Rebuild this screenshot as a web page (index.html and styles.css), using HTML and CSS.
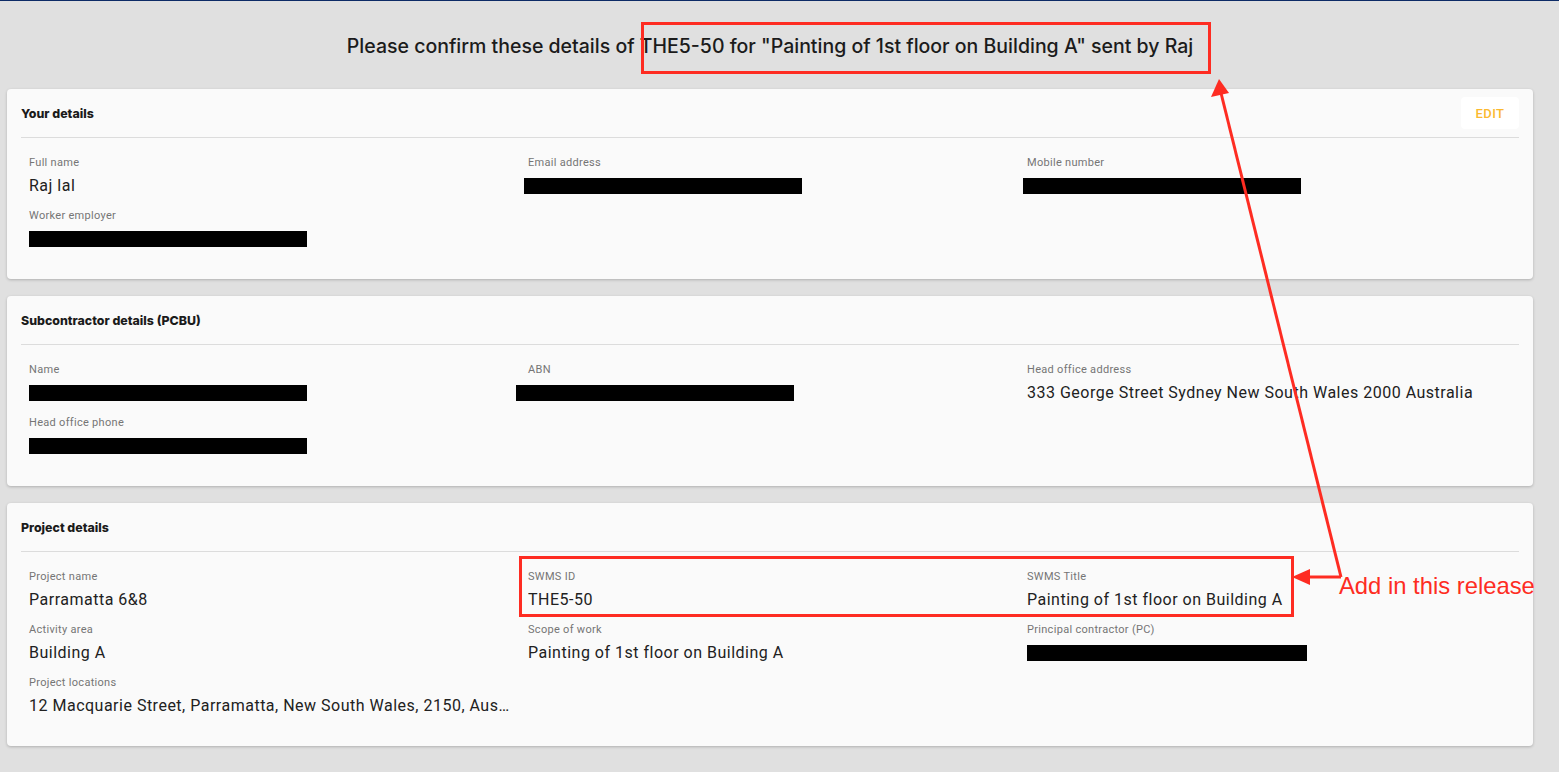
FILE: index.html
```html
<!DOCTYPE html>
<html lang="en">
<head>
    <meta charset="UTF-8">
    <meta name="viewport" content="width=device-width, initial-scale=1.0">
    <title>Confirm SWMS details</title>
    <link rel="stylesheet" href="styles.css">
</head>
<body>
    <h1 class="page-title">Please confirm these details of THE5-50 for "Painting of 1st floor on Building A" sent by Raj</h1>

    <div class="cards">
        <div class="card">
            <div class="card-header">
                <span class="card-title">Your details</span>
                <button class="edit-btn">EDIT</button>
            </div>
            <div class="card-body">
                <div class="field">
                    <div class="label">Full name</div>
                    <div class="value">Raj lal</div>
                </div>
                <div class="field">
                    <div class="label">Email address</div>
                    <div class="value masked"><span class="redact shift-sm"></span></div>
                </div>
                <div class="field">
                    <div class="label">Mobile number</div>
                    <div class="value masked"><span class="redact shift-sm"></span></div>
                </div>
                <div class="field">
                    <div class="label">Worker employer</div>
                    <div class="value masked"><span class="redact"></span></div>
                </div>
            </div>
        </div>

        <div class="card">
            <div class="card-header">
                <span class="card-title">Subcontractor details (PCBU)</span>
            </div>
            <div class="card-body">
                <div class="field">
                    <div class="label">Name</div>
                    <div class="value masked"><span class="redact"></span></div>
                </div>
                <div class="field">
                    <div class="label">ABN</div>
                    <div class="value masked"><span class="redact shift-lg"></span></div>
                </div>
                <div class="field">
                    <div class="label">Head office address</div>
                    <div class="value">333 George Street Sydney New South Wales 2000 Australia</div>
                </div>
                <div class="field">
                    <div class="label">Head office phone</div>
                    <div class="value masked"><span class="redact"></span></div>
                </div>
            </div>
        </div>

        <div class="card">
            <div class="card-header">
                <span class="card-title">Project details</span>
            </div>
            <div class="card-body">
                <div class="field">
                    <div class="label">Project name</div>
                    <div class="value">Parramatta 6&amp;8</div>
                </div>
                <div class="field">
                    <div class="label">SWMS ID</div>
                    <div class="value">THE5-50</div>
                </div>
                <div class="field">
                    <div class="label">SWMS Title</div>
                    <div class="value">Painting of 1st floor on Building A</div>
                </div>
                <div class="field">
                    <div class="label">Activity area</div>
                    <div class="value">Building A</div>
                </div>
                <div class="field">
                    <div class="label">Scope of work</div>
                    <div class="value">Painting of 1st floor on Building A</div>
                </div>
                <div class="field">
                    <div class="label">Principal contractor (PC)</div>
                    <div class="value masked"><span class="redact wide"></span></div>
                </div>
                <div class="field">
                    <div class="label">Project locations</div>
                    <div class="value">12 Macquarie Street, Parramatta, New South Wales, 2150, Australia</div>
                </div>
            </div>
        </div>
    </div>

    <!-- review annotations drawn over the screenshot -->
    <div class="note-box title-box"></div>
    <div class="note-box swms-box"></div>
    <div class="note-text">Add in this release</div>
    <svg class="note-arrows" width="1559" height="772" viewBox="0 0 1559 772">
        <line x1="1341" y1="576" x2="1221" y2="92" stroke="#fe2c22" stroke-width="3"/>
        <polygon points="1219,78 1211,96 1229,92" fill="#fe2c22"/>
        <line x1="1341" y1="576" x2="1306" y2="576" stroke="#fe2c22" stroke-width="3"/>
        <polygon points="1292,576 1310,568 1310,584" fill="#fe2c22"/>
    </svg>
</body>
</html>
```

FILE: styles.css
```css
html, body {
    margin: 0;
    padding: 0;
}
body {
    position: relative;
    background-color: #e0e0e0;
    border-top: 1px solid #0d2b66;
    font-family: Roboto, "Liberation Sans", sans-serif;
    color: #212121;
    min-height: 771px;
    overflow: hidden;
}
.page-title {
    margin: 0 26px 0 7px;
    padding: 33px 0 0;
    height: 56px;
    text-align: center;
    font-family: Inter, "Liberation Sans", sans-serif;
    font-size: 19.5px;
    font-weight: 500;
    color: #1b1b1b;
    line-height: 24px;
    box-sizing: border-box;
}
.cards {
    display: flex;
    flex-direction: column;
    gap: 17px;
    margin: 32px 26px 0 7px;
}
.card {
    background-color: #fafafa;
    border-radius: 4px;
    box-shadow: 0 1px 3px rgba(0, 0, 0, 0.22);
    padding: 0 14px;
}
.card-header {
    display: flex;
    align-items: center;
    justify-content: space-between;
    min-height: 32px;
    padding: 8px 0;
    border-bottom: 1px solid #dcdcdc;
}
.card-title {
    font-family: Inter, "Liberation Sans", sans-serif;
    font-size: 12.4px;
    font-weight: 800;
    color: #1b1b1b;
}
.edit-btn {
    height: 32px;
    width: 58px;
    border: none;
    border-radius: 4px;
    background-color: #ffffff;
    color: #fbb92f;
    font-family: Roboto, sans-serif;
    font-size: 13px;
    font-weight: 500;
    letter-spacing: 0.4px;
    cursor: pointer;
}
.card-body {
    display: grid;
    grid-template-columns: repeat(3, 499px);
    row-gap: 9px;
    padding: 17px 8px 27px;
}
.field {
    min-width: 0;
    padding-right: 16px;
}
.card-body .field:nth-child(3n) {
    padding-right: 0;
}
.label {
    font-size: 11px;
    line-height: 16px;
    letter-spacing: 0.3px;
    color: #757575;
}
.value {
    margin-top: 3px;
    margin-bottom: 1px;
    font-size: 16px;
    line-height: 24px;
    height: 24px;
    letter-spacing: 0.5px;
    white-space: nowrap;
    overflow: hidden;
    text-overflow: ellipsis;
}
.value.masked {
    overflow: visible;
}
.redact {
    display: inline-block;
    vertical-align: middle;
    width: 278px;
    height: 16px;
    margin-top: -2px;
    background-color: #000;
}
.redact.shift-sm {
    margin-left: -4px;
}
.redact.shift-lg {
    margin-left: -12px;
}
.redact.wide {
    width: 280px;
}
.note-box {
    position: absolute;
    border: 3px solid #fe2c22;
    box-sizing: border-box;
}
.title-box {
    left: 641px;
    top: 21px;
    width: 570px;
    height: 52px;
}
.swms-box {
    left: 519px;
    top: 555px;
    width: 775px;
    height: 61px;
}
.note-text {
    position: absolute;
    left: 1339px;
    top: 571px;
    font-family: "Liberation Sans", Arial, sans-serif;
    font-size: 23.8px;
    line-height: 28px;
    color: #fe2c22;
}
.note-arrows {
    position: absolute;
    top: 0;
    left: 0;
    pointer-events: none;
}
```
